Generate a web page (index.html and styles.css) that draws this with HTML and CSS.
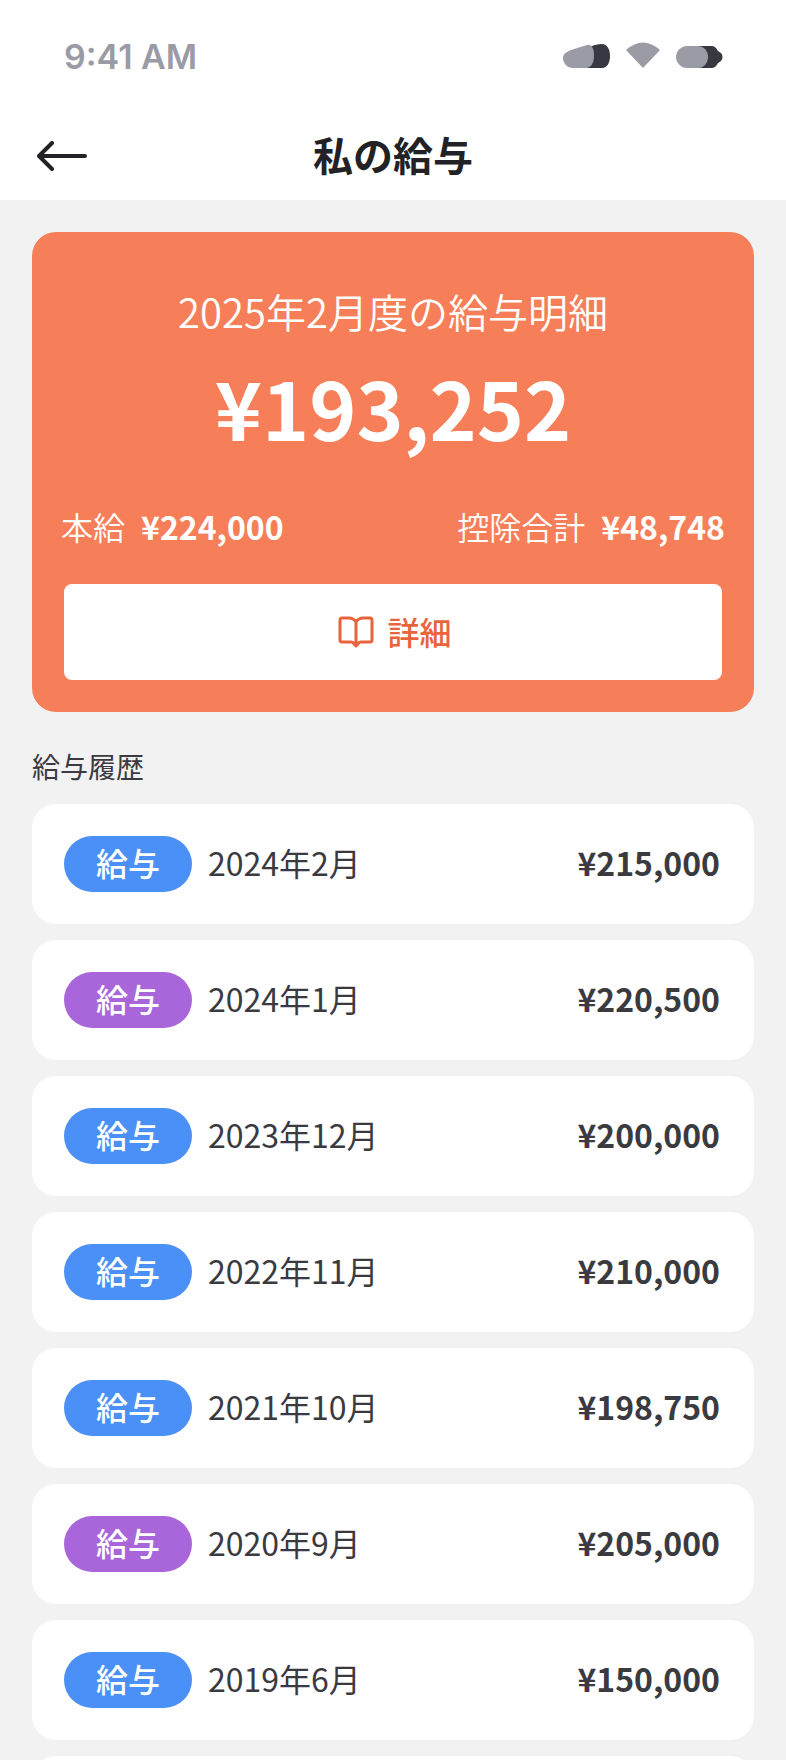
FILE: index.html
```html
<!DOCTYPE html>
<html lang="ja">
<head>
  <meta charset="UTF-8" />
  <meta name="viewport" content="width=device-width, initial-scale=1.0"/>
  <title>私の給与</title>
  <link rel="stylesheet" href="styles.css">
</head>
<body>
  <header class="top">
    <div class="status">
      <span class="time">9:41 AM</span>
      <div class="status-icons">
        <svg width="47" height="24" viewBox="0 0 47 24">
          <path d="M26 3 L32 1 Q36 0 39 0 C44 0 47 5 47 12 C47 19 44 24 39 24 L20 24 Z" fill="#383842"/>
          <path d="M11 5 L24 1 C29 0 31 5 31 12 C31 19 28 24 23 24 L10 24 C4 24 0 19 0 14 C0 9 5 7 11 5 Z" fill="#9b9ba6"/>
        </svg>
        <svg width="34" height="26" viewBox="0 0 34 26">
          <path d="M0 8 Q17 -7 34 8 L17 26 Z" fill="#9b9ba6"/>
        </svg>
        <svg width="47" height="22" viewBox="0 0 47 22">
          <path d="M20 0 L35 0 C38 0 40 1 42 5 L45 7 C47 9 47 13 45 15 L42 17 C40 21 38 22 35 22 L20 22 Z" fill="#383842"/>
          <path d="M11 0 L22 0 C28 0 32 5 32 11 C32 17 28 22 22 22 L11 22 C5 22 0 17 0 11 C0 5 5 0 11 0 Z" fill="#9b9ba6"/>
        </svg>
      </div>
    </div>
    <div class="nav">
      <svg class="back" width="50" height="30" viewBox="0 0 50 30">
        <path d="M48 15 H2 M15 2 L2 15 L15 28" fill="none" stroke="#222226" stroke-width="4" stroke-linecap="round" stroke-linejoin="round"/>
      </svg>
      <h1>私の給与</h1>
    </div>
  </header>

  <main class="content">
    <section class="hero">
      <p class="hero-title">2025年2月度の給与明細</p>
      <p class="hero-amount">¥193,252</p>
      <div class="hero-row">
        <div class="hero-item"><span>本給</span><strong>¥224,000</strong></div>
        <div class="hero-item"><span>控除合計</span><strong>¥48,748</strong></div>
      </div>
      <button class="detail-btn">
        <svg width="36" height="32" viewBox="0 0 36 32">
          <path d="M18 6 C16 3 14 2 11 2 H4 C2.8 2 2 2.8 2 4 V24 C2 25.2 2.8 26 4 26 H13 C14.5 26 15.5 26.6 16 28 L18 30 L20 28 C20.5 26.6 21.5 26 23 26 H32 C33.2 26 34 25.2 34 24 V4 C34 2.8 33.2 2 32 2 H25 C22 2 20 3 18 6 Z M18 6 V28" fill="none" stroke="#e8643c" stroke-width="3" stroke-linejoin="round"/>
        </svg>
        <span class="detail-label">詳細</span>
      </button>
    </section>

    <h2 class="history-title">給与履歴</h2>

    <ul class="history">
      <li class="row"><span class="pill blue">給与</span><span class="date">2024年2月</span><span class="amount">¥215,000</span></li>
      <li class="row"><span class="pill purple">給与</span><span class="date">2024年1月</span><span class="amount">¥220,500</span></li>
      <li class="row"><span class="pill blue">給与</span><span class="date">2023年12月</span><span class="amount">¥200,000</span></li>
      <li class="row"><span class="pill blue">給与</span><span class="date">2022年11月</span><span class="amount">¥210,000</span></li>
      <li class="row"><span class="pill blue">給与</span><span class="date">2021年10月</span><span class="amount">¥198,750</span></li>
      <li class="row"><span class="pill purple">給与</span><span class="date">2020年9月</span><span class="amount">¥205,000</span></li>
      <li class="row"><span class="pill blue">給与</span><span class="date">2019年6月</span><span class="amount">¥150,000</span></li>
      <li class="row"></li>
    </ul>
  </main>
</body>
</html>
```

FILE: styles.css
```css
* {
  box-sizing: border-box;
}
html, body {
  height: 1760px;
  overflow: hidden;
}
body {
  margin: 0;
  background-color: #f2f2f2;
  font-family: "Noto Sans CJK JP", "Noto Sans", sans-serif;
  color: #3a3a40;
}
.top {
  height: 200px;
  background: white;
}
.status {
  height: 112px;
  padding: 36px 63px 0 64px;
  display: flex;
  justify-content: space-between;
  align-items: flex-start;
}
.time {
  font-family: Inter, sans-serif;
  font-size: 34px;
  line-height: 42px;
  font-weight: 600;
  color: #9b9ba6;
}
.status-icons {
  display: flex;
  align-items: flex-end;
  gap: 16px;
  height: 32px;
  padding-left: 1px;
}
.nav {
  position: relative;
  height: 88px;
  display: flex;
  align-items: center;
  justify-content: center;
}
.back {
  position: absolute;
  left: 37px;
  top: 29px;
}
h1 {
  margin: -4px 0 0;
  font-size: 40px;
  line-height: 88px;
  font-weight: 700;
  color: #222226;
}
.content {
  height: 1560px;
  overflow: hidden;
  padding: 32px 32px 0;
}
.hero {
  height: 480px;
  padding: 50px 32px 0;
  background: #f67f59;
  border-radius: 24px;
  color: white;
  text-align: center;
}
.hero-title {
  margin: 0;
  font-size: 40px;
  line-height: 58px;
  font-weight: 350;
}
.hero-amount {
  margin: 14px 0 0;
  font-size: 80px;
  line-height: 104px;
  font-weight: 700;
}
.hero-row {
  display: flex;
  justify-content: space-between;
  margin: 44px -3px 0;
  font-size: 32px;
  line-height: 48px;
}
.hero-item span {
  font-weight: 350;
  margin-right: 16px;
}
.hero-item strong {
  font-weight: 700;
}
.detail-btn {
  width: 100%;
  height: 96px;
  margin-top: 34px;
  display: flex;
  align-items: center;
  justify-content: center;
  gap: 13px;
  padding: 0 0 0 4px;
  background: white;
  border: none;
  border-radius: 8px;
  color: #e8643c;
  font-family: inherit;
  font-size: 32px;
}
.detail-label {
  margin-top: -3px;
  font-weight: 500;
}
.history-title {
  margin: 34px 0 0;
  font-size: 28px;
  line-height: 40px;
  font-weight: 400;
}
.history {
  list-style: none;
  margin: 18px 0 0;
  padding: 0;
  display: flex;
  flex-direction: column;
  gap: 16px;
}
.row {
  height: 120px;
  flex: none;
  padding: 0 34px 4px 32px;
  display: flex;
  align-items: center;
  background: white;
  border-radius: 24px;
  font-size: 32px;
}
.pill {
  width: 128px;
  height: 56px;
  margin: 4px 16px 0 0;
  padding-bottom: 4px;
  display: flex;
  align-items: center;
  justify-content: center;
  border-radius: 28px;
  color: white;
  font-weight: 500;
}
.blue {
  background: #4a90f7;
}
.purple {
  background: #a966db;
}
.date {
  flex: 1;
}
.amount {
  font-weight: 700;
}
```
